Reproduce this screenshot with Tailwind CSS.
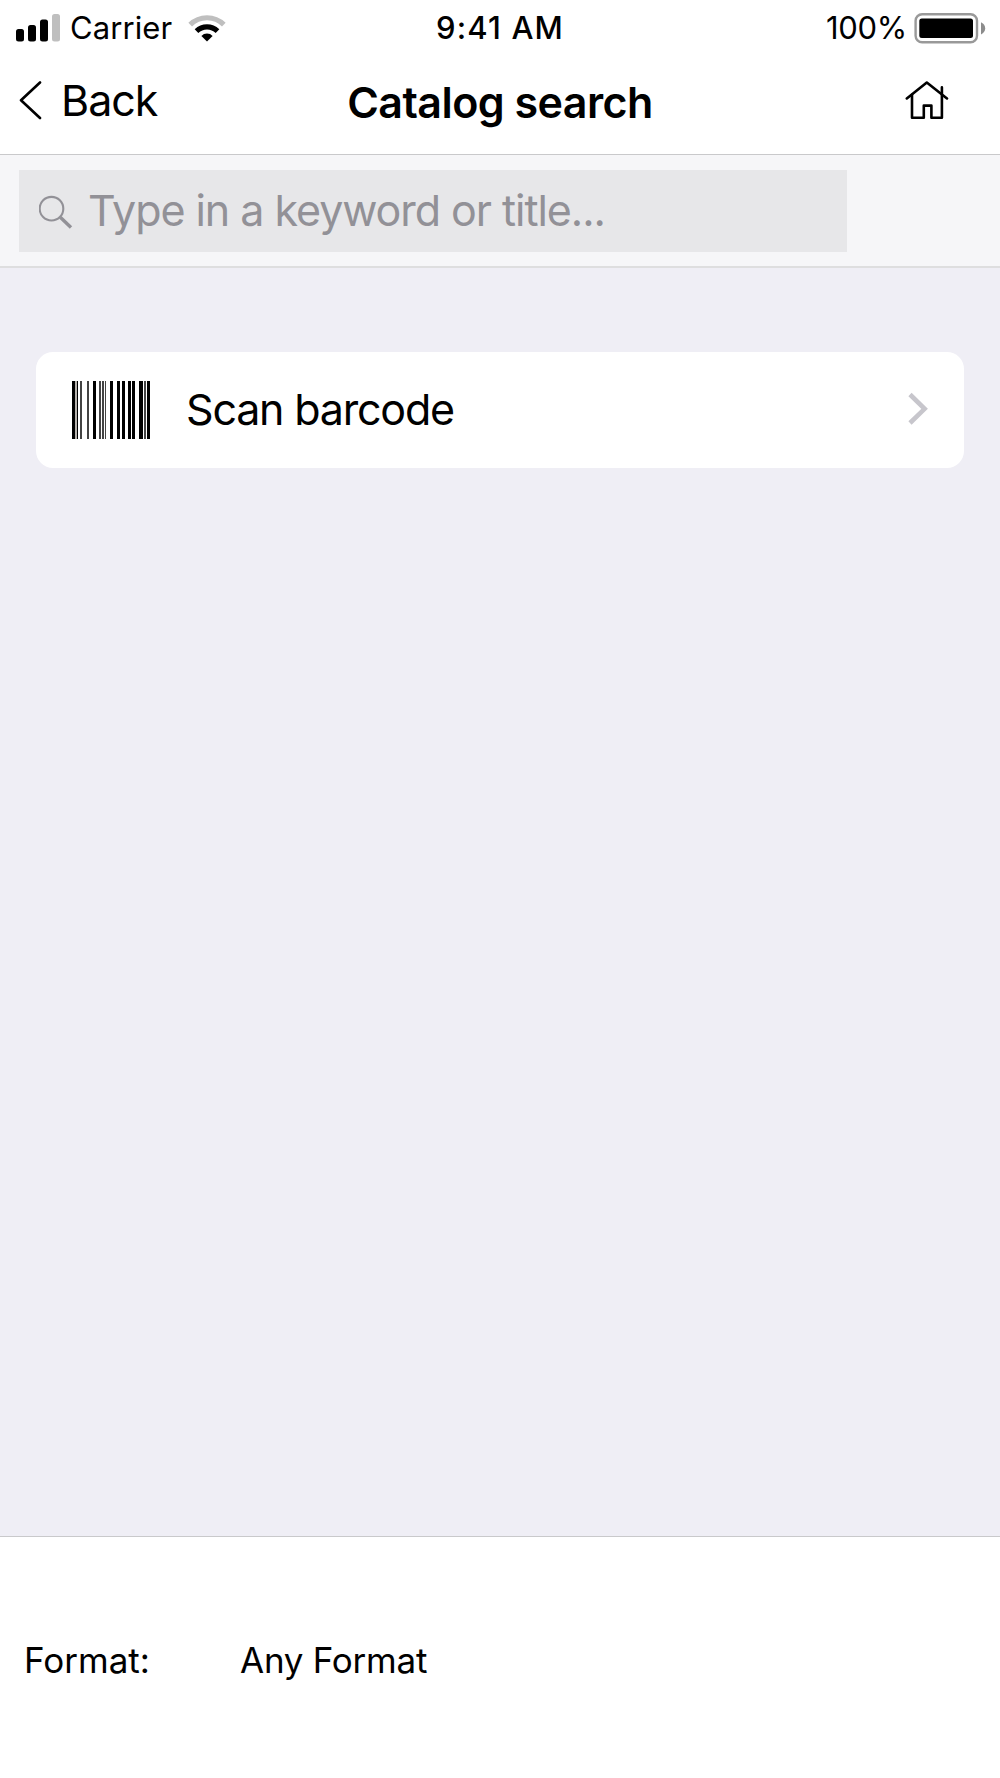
<!DOCTYPE html>
<html lang="en">
<head>
    <meta charset="utf-8">
    <meta name="viewport" content="width=device-width, initial-scale=1">
    <title>Catalog search</title>
    <script src="https://cdn.jsdelivr.net/npm/@tailwindcss/browser@4"></script>
</head>
<body class="flex h-[1778px] w-[1000px] flex-col overflow-hidden bg-[#efeef5] font-['Inter',sans-serif] text-black">
    <header class="h-[155px] border-b border-[#c9c9cb] bg-white">
        <!-- status bar -->
        <div class="grid h-[54px] grid-cols-3 items-center text-[31px] leading-[54px]">
            <div class="flex items-center">
                <svg class="ml-4 h-[54px] w-11" viewBox="0 0 44 54">
                    <rect x="0" y="28" width="8" height="12.5" rx="2.5" />
                    <rect x="12" y="24" width="8" height="16.5" rx="2.5" />
                    <rect x="24" y="18.5" width="8" height="22" rx="2.5" />
                    <rect x="36" y="13" width="8" height="27.5" rx="2.5" fill="#bfbfbf" />
                </svg>
                <span class="ml-[10px] pt-px tracking-[0.1px]">Carrier</span>
                <svg class="ml-[15px] h-[54px] w-10" viewBox="0 0 40 54" fill="none" stroke-width="5.2">
                    <path d="M3.2 23.6a24 24 0 0 1 33.6 0" stroke="#bfbfbf" />
                    <path d="M9.5 30.2a15 15 0 0 1 21 0" stroke="#000" />
                    <path d="M20 40.5l-5.6-5.6a8 8 0 0 1 11.2 0z" fill="#000" />
                </svg>
            </div>
            <span class="pt-px text-center font-medium tracking-[1.15px]">9:41 AM</span>
            <div class="flex items-center justify-end">
                <span class="pt-px tracking-[-0.3px]">100%</span>
                <svg class="mr-3.5 ml-[7px] h-[54px] w-[72px]" viewBox="0 0 72 54">
                    <rect x="1.6" y="13.3" width="61.4" height="28" rx="6.5" fill="none" stroke="#999" stroke-width="2.4" />
                    <rect x="5.3" y="17.5" width="53.7" height="19.5" rx="2.5" />
                    <path d="M67 21.2q4.2 2 4.2 6.1t-4.2 6.1z" fill="#8c8c8c" />
                </svg>
            </div>
        </div>
        <!-- navigation bar -->
        <nav class="grid h-[91px] grid-cols-[300px_1fr_300px] items-center text-[43px] leading-[91px]">
            <a href="#" class="flex items-center">
                <svg class="ml-[18px] h-10 w-6" viewBox="0 0 24 40" fill="none" stroke="#000" stroke-width="2.6" stroke-linecap="round" stroke-linejoin="round">
                    <path d="M22 1.5L3 19.2L22 37" />
                </svg>
                <span class="ml-[19px] pb-[2px] tracking-[-1px]">Back</span>
            </a>
            <h1 class="pt-[3px] text-center font-semibold tracking-[-0.55px] whitespace-nowrap">Catalog search</h1>
            <a href="#" class="flex justify-end" aria-label="Home">
                <svg class="mr-[50px] h-10 w-12" viewBox="0 0 48 40" fill="none" stroke="#000" stroke-width="2.6" stroke-linecap="round" stroke-linejoin="round">
                    <path d="M4.8 17.4L24.8 1.5L45 17.4" />
                    <path d="M10 13.7v23h11.8V24.6h7.6v12.1h10.5V6.4" />
                </svg>
            </a>
        </nav>
    </header>

    <div class="h-[113px] border-b-2 border-[#dededf] bg-[#f6f6f8] pt-[15px] pl-[19px]">
        <label class="flex h-[82px] w-[828px] items-center bg-[#e7e7e9] text-[#929197]">
            <svg class="ml-5 h-9 w-9" viewBox="0 0 36 36" fill="none" stroke="currentColor">
                <circle cx="12.5" cy="15.7" r="11.8" stroke-width="2.1" />
                <path d="M21.3 24.2L32 34.5" stroke-width="3.4" />
            </svg>
            <span class="ml-[13px] text-[43px] leading-[80px] pb-[2px] tracking-[-1.05px]">Type in a keyword or title...</span>
        </label>
    </div>

    <main class="grow px-9 pt-[84px]">
        <a href="#" class="flex h-[116px] items-center rounded-[17px] bg-white">
            <svg class="ml-9 h-[58px] w-[78px]" viewBox="0 0 78 58" shape-rendering="crispEdges">
                <path d="M0 0h3v58h-3zM5 0h1v58h-1zM21 0h3v58h-3zM38 0h3v58h-3zM45 0h3v58h-3zM50 0h3v58h-3zM56 0h3v58h-3zM60 0h3v58h-3zM67 0h4v58h-4zM75 0h3v58h-3z" />
                <path d="M8 0h2v58h-2zM15 0h2v58h-2zM27 0h2v58h-2zM30 0h2v58h-2zM33 0h1v58h-1zM72 0h2v58h-2z" fill="#444" />
                <path d="M3 0h2v58h-2z" fill="#b5b1ac" />
            </svg>
            <span class="ml-9 text-[43px] leading-[114px] pb-[2px] tracking-[-1.2px]">Scan barcode</span>
            <svg class="mr-[34px] ml-auto h-9 w-6" viewBox="0 0 24 36" fill="none" stroke="#c7c6cc" stroke-width="4.6">
                <path d="M4 2.5L18.6 16.8L4 31" />
            </svg>
        </a>
    </main>

    <footer class="flex h-[242px] border-t border-[#c9c9cb] bg-white pt-[93px] pl-6 text-[35px] leading-[60px]">
        <span class="w-[216px]">Format:</span>
        <span class="tracking-[-0.25px]">Any Format</span>
    </footer>
</body>
</html>
